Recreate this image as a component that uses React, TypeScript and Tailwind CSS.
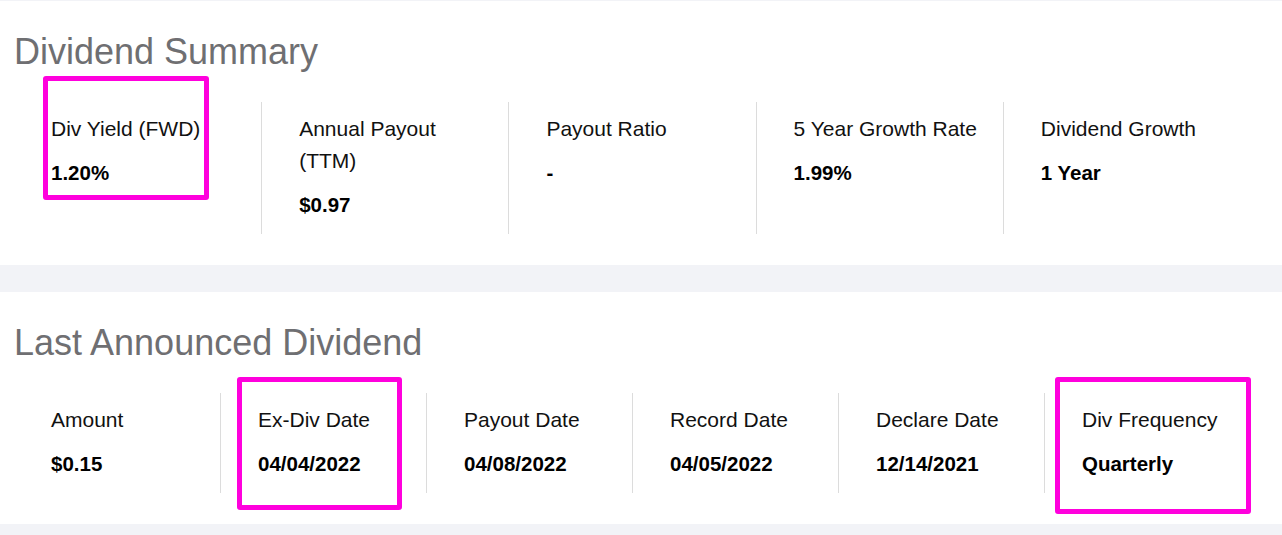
const summary = [
  { label: 'Div Yield (FWD)', value: '1.20%', mark: 'left-[29px] top-[-26px] w-[166px] h-[124px]' },
  { label: 'Annual Payout (TTM)', value: '$0.97' },
  { label: 'Payout Ratio', value: '-' },
  { label: '5 Year Growth Rate', value: '1.99%' },
  { label: 'Dividend Growth', value: '1 Year' },
]

const lastDividend = [
  { label: 'Amount', value: '$0.15' },
  { label: 'Ex-Div Date', value: '04/04/2022', mark: 'left-[16px] top-[-16px] w-[165px] h-[133px]' },
  { label: 'Payout Date', value: '04/08/2022' },
  { label: 'Record Date', value: '04/05/2022' },
  { label: 'Declare Date', value: '12/14/2021' },
  { label: 'Div Frequency', value: 'Quarterly', mark: 'left-[10px] top-[-16px] w-[196px] h-[137px]' },
]

type Item = { label: string; value: string; mark?: string }

const Stat = ({ item, first }: { item: Item; first: boolean }) => (
  <div className={`relative pl-[37px] pr-4 pt-[11px] pb-[13px] ${first ? '' : 'border-l border-[#dcdcdc]'}`}>
    <div className="text-[21px] leading-[32px] text-[#111]">{item.label}</div>
    <div className="mt-3 text-[20.5px] leading-[32px] font-bold text-[#000]">{item.value}</div>
    {item.mark && (
      <div className={`absolute ${item.mark} border-[5px] border-[#ff00dd] rounded-[3px] pointer-events-none`} />
    )}
  </div>
)

const Section = ({ title, items, cols, pb }: { title: string; items: Item[]; cols: string; pb: string }) => (
  <section className={`bg-white pt-[31px] ${pb} px-[14px]`}>
    <h2 className="text-[36px] leading-[40px] text-[#6f6f72]">{title}</h2>
    <div className={`mt-[30px] grid ${cols} w-[1236px]`}>
      {items.map((item, i) => (
        <Stat key={item.label} item={item} first={i === 0} />
      ))}
    </div>
  </section>
)

export default function App() {
  return (
    <div className="min-h-screen bg-[#f2f3f7] pt-px" style={{ fontFamily: '"Liberation Sans", Arial, sans-serif' }}>
      <Section title="Dividend Summary" items={summary} cols="grid-cols-5" pb="pb-[31px]" />
      <div className="mt-[27px]">
        <Section title="Last Announced Dividend" items={lastDividend} cols="grid-cols-6" pb="pb-[31px]" />
      </div>
    </div>
  )
}
